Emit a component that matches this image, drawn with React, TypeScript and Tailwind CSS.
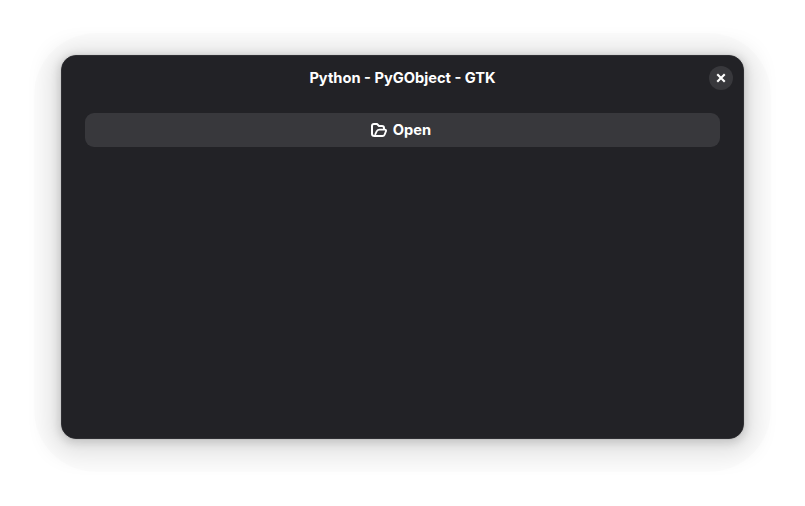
function FolderOpenIcon() {
  return (
    <svg className="h-4 w-4" viewBox="0 0 16 16" fill="none" stroke="currentColor" strokeWidth="2" strokeLinejoin="round">
      <path d="M3.5 14C1.8 14 1 13.3 1 12V4C1 2.7 1.7 2 3 2H6L8 4H11C12.3 4 13 4.7 13 6V7" />
      <path d="M3 14H11.5C12.5 14 13.2 13.6 13.6 12.7L15 9.2C15.3 8.2 14.8 7.7 14 7.7H8.5C7.2 7.7 6.4 8.1 5.8 9.1L4 12.8" strokeWidth="1.8" />
    </svg>
  );
}

function CloseIcon() {
  return (
    <svg className="h-4 w-4" viewBox="0 0 16 16" fill="none" stroke="currentColor" strokeWidth="2.1" strokeLinecap="square">
      <path d="M5 5L11 11M11 5L5 11" />
    </svg>
  );
}

export default function App() {
  return (
    <main className="h-[506px] w-[805px] overflow-hidden bg-white px-[61px] pt-[55px] font-['Inter',sans-serif] text-white">
      <section className="relative flex h-[384px] w-[683px] flex-col rounded-[15px] border border-[#303034] bg-[#222226] shadow-[0_2px_8px_2px_rgba(0,0,0,0.13),0_4px_24px_11px_rgba(0,0,0,0.11),0_0_0_1px_rgba(0,0,0,0.03)]">
        <div className="absolute -top-[23px] -right-[28px] -bottom-[34px] -left-[28px] -z-0 rounded-[62px] bg-black/[0.012]" />
        <div className="relative flex grow flex-col rounded-[14px] bg-[#222226]">
          <header className="grid h-11 shrink-0 grid-cols-[1fr_auto_1fr] items-center pr-[10px] pl-[10px]">
            <span />
            <h1 className="text-[14.667px] leading-5 font-bold">Python - PyGObject - GTK</h1>
            <button className="flex h-6 w-6 items-center justify-center justify-self-end rounded-full bg-[#38383c]" aria-label="Close">
              <CloseIcon />
            </button>
          </header>
          <div className="px-[23px] pt-[13px]">
            <button className="flex h-[34px] w-full items-center justify-center gap-1.5 rounded-[9px] bg-[#38383c] pr-[3px] text-[14.667px] leading-5 font-bold">
              <FolderOpenIcon />
              <span>Open</span>
            </button>
          </div>
        </div>
      </section>
    </main>
  );
}
